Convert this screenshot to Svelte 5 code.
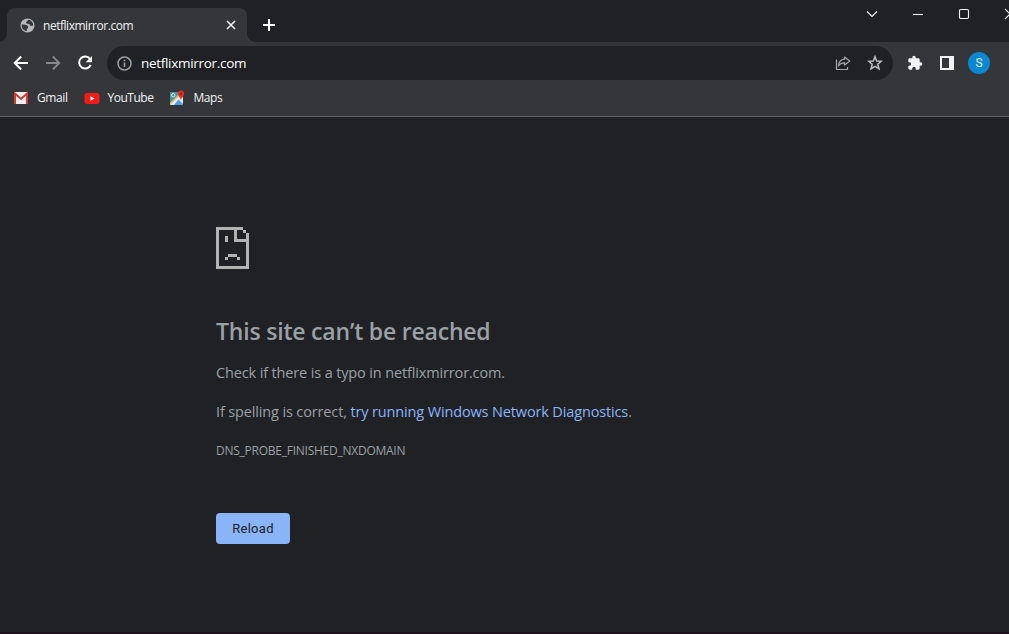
<script lang="ts">
  const host = "netflixmirror.com";
  const windowsLink = "try running Windows Network Diagnostics";
</script>

<div class="browser">
  <header class="tab-strip">
    <div class="tab">
      <svg class="globe" width="15" height="15" viewBox="0 0 15 15">
        <circle cx="7.5" cy="7.5" r="7" fill="#b4b7bb" />
        <path d="M1.6 6.6 L3 6.6 L5.6 6.8 L8 8 L8.2 9.6 L7 11 L6.6 13.2 C4 13 1.6 10.8 1.6 6.6Z M8.6 1.8 L6 4.2 L6.4 5.6 L9.2 6 L10.4 7.8 L13.2 7.8 C13.400 5 11.500 2.400 8.600 1.800Z" fill="#35363a" />
      </svg>
      <span class="tab-title">{host}</span>
      <svg class="tab-close" width="10" height="10" viewBox="0 0 10 10">
        <path d="M1 1 L9 9 M9 1 L1 9" stroke="#f1f3f4" stroke-width="1.6" />
      </svg>
    </div>
    <svg class="new-tab" width="12" height="12" viewBox="0 0 12 12">
      <path d="M6 0 V12 M0 6 H12" stroke="#fff" stroke-width="2" />
    </svg>
    <div class="window-controls">
      <svg width="12" height="12" viewBox="0 0 12 12"><path d="M1 3.5 L6 8.5 L11 3.5" /></svg>
      <svg width="12" height="12" viewBox="0 0 12 12"><path d="M1 6.5 H11" /></svg>
      <svg width="12" height="12" viewBox="0 0 12 12"><rect x="1.5" y="1.5" width="9" height="9" rx="1.2" /></svg>
      <svg width="12" height="12" viewBox="0 0 12 12"><path d="M1 1 L11 11 M11 1 L1 11" /></svg>
    </div>
  </header>

  <nav class="toolbar">
    <svg class="nav-icon" width="16" height="16" viewBox="0 0 16 16">
      <path d="M15 8 H2 M8.2 1.5 L1.7 8 L8.2 14.5" stroke="#fff" stroke-width="2" fill="none" />
    </svg>
    <svg class="nav-icon" width="16" height="16" viewBox="0 0 16 16">
      <path d="M1 8 H14 M7.8 1.5 L14.3 8 L7.8 14.5" stroke="#85878a" stroke-width="1.8" fill="none" />
    </svg>
    <svg class="nav-icon" width="16" height="16" viewBox="0 0 16 16">
      <path d="M13 4 A6 6 0 1 0 13.7 9.8" stroke="#fff" stroke-width="2" fill="none" />
      <path d="M15 1 V7.3 H8.7Z" fill="#fff" />
    </svg>
    <div class="address">
      <svg class="info" width="15" height="15" viewBox="0 0 15 15">
        <circle cx="7.5" cy="7.5" r="6.5" stroke="#9aa0a6" stroke-width="1.5" fill="none" />
        <path d="M7.5 6.5 V11 M7.5 3.7 V5.2" stroke="#9aa0a6" stroke-width="1.6" />
      </svg>
      <span class="url">{host}</span>
      <svg class="share" width="16" height="16" viewBox="0 0 16 16">
        <path d="M1.500 4.5 V14.5 H12.5 V12" stroke="#a5a8ac" stroke-width="1.2" fill="none" />
        <path d="M9.5 2 L14.8 6 L9.5 10 V7.8 C6.5 7.7 4.7 8.8 3.5 11 C3.8 7 6 4.5 9.5 4.2Z" stroke="#a5a8ac" stroke-width="1.2" stroke-linejoin="round" fill="none" />
      </svg>
      <svg class="star" width="16" height="16" viewBox="0 0 16 16">
        <path d="M8 1.7 L9.7 6 L14.3 6.3 L10.8 9.2 L12 13.8 L8 11.3 L4 13.8 L5.2 9.2 L1.7 6.3 L6.3 6Z" stroke="#bdc1c6" stroke-width="1.5" fill="none" />
      </svg>
    </div>
    <svg class="puzzle" width="16" height="16" viewBox="0 0 24 24">
      <path fill="#f1f3f4" d="M20.5 11H19V7c0-1.1-.9-2-2-2h-4V3.5a2.5 2.5 0 0 0-5 0V5H4c-1.1 0-2 .9-2 2v3.8h1.5a2.7 2.7 0 0 1 0 5.4H2V20c0 1.1.9 2 2 2h3.8v-1.5a2.7 2.7 0 0 1 5.4 0V22H17c1.1 0 2-.9 2-2v-4h1.5a2.5 2.5 0 0 0 0-5z" />
    </svg>
    <svg class="panel" width="14" height="14" viewBox="0 0 14 14">
      <path fill="#f1f3f4" fill-rule="evenodd" d="M0 0 H14 V14 H0Z M2 2 V12 H9 V2Z" />
    </svg>
    <span class="avatar">S</span>
  </nav>

  <div class="bookmarks">
    <div class="bookmark">
      <svg width="16" height="14" viewBox="0 0 16 14">
        <rect x="1" y="1" width="14" height="12" rx="1" fill="#f0f0f0" />
        <path d="M2 13 V2.500 L8 8 L14 2.500 V13" stroke="#d6392f" stroke-width="2" fill="none" />
      </svg>
      <span class="gmail">Gmail</span>
    </div>
    <div class="bookmark">
      <svg width="16" height="14" viewBox="0 0 16 14">
        <rect x="0.5" y="2" width="15" height="11" rx="2.5" fill="#f21d18" />
        <path d="M6.5 5.2 L10.5 7.5 L6.5 9.8Z" fill="#fff" />
      </svg>
      <span class="youtube">YouTube</span>
    </div>
    <div class="bookmark">
      <svg width="16" height="16" viewBox="0 0 16 16">
        <rect x="1" y="2" width="13" height="13" rx="1" fill="#4f949b" />
        <path d="M1 14 L11 4 L14 7 V15 H2Z" fill="#e8eaed" />
        <path d="M1 13 L9 5 L10 6.500 L1 15Z" fill="#e0c66a" />
        <path d="M5 15 L9.5 9.5 L14 14 V15Z" fill="#4c9df0" />
        <circle cx="4.2" cy="5.2" r="1.7" stroke="#dceef0" fill="none" />
        <path d="M12 0.5 A3.2 3.2 0 0 1 15.2 3.7 C15.2 6 12.5 7 12 10.5 C11.5 7 8.8 6 8.8 3.7 A3.2 3.2 0 0 1 12 0.5Z" fill="#df3028" />
        <circle cx="12" cy="3.7" r="1.1" fill="#8c1c18" />
      </svg>
      <span class="maps">Maps</span>
    </div>
  </div>

  <main class="error-page">
    <svg class="sad-page" width="33" height="42" viewBox="0 0 11 14" shape-rendering="crispEdges">
      <path fill="#b3b3b3" d="M0 0H9V1H7V4H10V2H11V14H0Z M1 1V13H10V5H6V1Z M9 1H10V2H9Z" fill-rule="evenodd" />
      <path fill="#b3b3b3" d="M3 3H4V5H3Z M4 9H7V10H4Z M3 10H4V11H3Z M7 10H8V11H7Z" />
    </svg>
    <h1>This site can’t be reached</h1>
    <p class="summary">Check if there is a typo in {host}.</p>
    <p class="suggestion">If spelling is correct, <a href="#diagnostics">{windowsLink}</a>.</p>
    <div class="error-code">DNS_PROBE_FINISHED_NXDOMAIN</div>
    <button>Reload</button>
  </main>
</div>

<style>
  :global(body) {
    margin: 0;
    background: #202124;
  }

  .browser {
    display: flex;
    flex-direction: column;
    box-sizing: border-box;
    width: 1009px;
    height: 634px;
    overflow: hidden;
    border-bottom: 2px solid #1c1220;
    background: #202124;
    font-family: "Open Sans", "Noto Sans", sans-serif;
    white-space: nowrap;
  }

  svg {
    display: block;
    flex: none;
  }

  .tab-strip {
    display: flex;
    height: 42px;
    flex: none;
    padding-left: 7px;
  }

  .tab {
    position: relative;
    display: flex;
    align-items: center;
    box-sizing: border-box;
    width: 240px;
    height: 34px;
    margin-top: 8px;
    padding: 0 11px 0 12px;
    border-radius: 8px 8px 0 0;
    background: #35363a;
  }

  .tab::before,
  .tab::after {
    content: "";
    position: absolute;
    bottom: 0;
    width: 8px;
    height: 8px;
  }

  .tab::before {
    left: -8px;
    background: radial-gradient(circle at 0 0, transparent 7.5px, #35363a 8px);
  }

  .tab::after {
    right: -8px;
    background: radial-gradient(circle at 100% 0, transparent 7.5px, #35363a 8px);
  }

  .globe {
    margin-left: 1px;
  }

  .tab-title {
    flex: 1;
    margin-left: 8px;
    color: #f1f3f4;
    font-size: 12px;
    letter-spacing: -0.47px;
  }

  .new-tab {
    margin: 19px 0 0 16px;
  }

  .window-controls {
    display: flex;
    gap: 34px;
    margin: 8px -7px 0 auto;
  }

  .window-controls svg {
    fill: none;
    stroke: #f1f3f4;
    stroke-width: 1.1;
  }

  .toolbar {
    display: flex;
    align-items: center;
    box-sizing: border-box;
    height: 42px;
    flex: none;
    padding: 0 19px 0 13px;
    background: #35363a;
  }

  .nav-icon {
    margin-right: 16px;
  }

  .address {
    display: flex;
    align-items: center;
    box-sizing: border-box;
    width: 786px;
    height: 34px;
    margin-left: -2px;
    padding: 0 10px;
    border-radius: 17px;
    background: #202124;
  }

  .url {
    flex: 1;
    margin-left: 9px;
    color: #fff;
    font-size: 13.5px;
    letter-spacing: -0.3px;
  }

  .star {
    margin-left: 16px;
  }

  .puzzle {
    margin-left: 14px;
  }

  .panel {
    margin-left: 17px;
  }

  .avatar {
    width: 22px;
    height: 22px;
    margin-left: 14px;
    border-radius: 50%;
    background: #0788d1;
    color: #e8f4fb;
    font: 12px/22px Roboto, sans-serif;
    text-align: center;
  }

  .bookmarks {
    display: flex;
    box-sizing: border-box;
    height: 33px;
    flex: none;
    padding: 0 0 5px 13px;
    border-bottom: 1px solid #606164;
    background: #35363a;
  }

  .bookmark {
    display: flex;
    align-items: center;
    gap: 8px;
    margin-right: 16px;
    color: #f1f3f4;
    font-size: 12px;
    letter-spacing: -0.4px;
  }

  .youtube {
    letter-spacing: -0.5px;
  }

  .error-page {
    display: flex;
    flex-direction: column;
    align-items: flex-start;
    padding: 110px 0 0 216px;
    color: #9aa0a6;
    font-size: 14.5px;
  }

  h1 {
    margin: 46px 0 0;
    font-size: 23px;
    font-weight: 600;
    line-height: 32px;
    letter-spacing: -0.2px;
  }

  p {
    margin: 0;
    line-height: 20px;
    letter-spacing: -0.14px;
  }

  .summary {
    margin-top: 16px;
  }

  .suggestion {
    margin-top: 19px;
  }

  a {
    color: #8ab4f8;
    text-decoration: none;
  }

  .error-code {
    margin-top: 20px;
    font-size: 12px;
    line-height: 18px;
    letter-spacing: -0.25px;
  }

  button {
    width: 74px;
    height: 31px;
    margin-top: 53px;
    padding: 0;
    border: 0;
    border-radius: 4px;
    background: #8ab4f8;
    color: #202124;
    font: 13px Roboto, Arial, sans-serif;
    letter-spacing: 0.3px;
  }
</style>
